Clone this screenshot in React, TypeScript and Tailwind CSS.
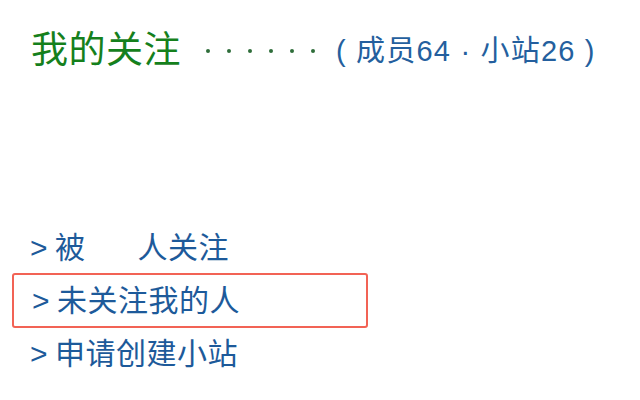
import React from 'react';

const font = { fontFamily: '"Liberation Sans", "Noto Sans CJK SC", sans-serif' };

const App: React.FC = () => {
  return (
    <div className="w-[640px] h-[400px] bg-white overflow-hidden" style={font}>
      {/* Header */}
      <div className="flex items-center pl-[31px] pt-[26px] h-[74px]">
        <h1 className="text-[37px] leading-none text-[#15801c] tracking-[0.5px]">我的关注</h1>
        <div className="flex items-center gap-[17px] ml-[25px] mt-[2px]">
          {[0, 1, 2, 3, 4, 5].map((i) => (
            <span key={i} className="w-[4px] h-[4px] rounded-full bg-[#2f6d3a]" />
          ))}
        </div>
        <p className="ml-[21px] text-[29px] leading-none text-[#245f9e] tracking-[1.2px] mt-[3px]">
          ( 成员64 · 小站26 )
        </p>
      </div>

      {/* Links */}
      <ul className="mt-[148px] text-[30px] tracking-[0.5px] text-[#1d5a9a]">
        <li className="h-[51px] flex items-center pl-[30px]">
          <span className="mr-[7px]">&gt;</span>被<span className="w-[52px]" />人关注
        </li>
        <li className="ml-[12px] w-[356px] h-[55px] flex items-center pl-[18px] border-2 border-[#f26355] rounded-[3px]">
          <span className="mr-[7px]">&gt;</span>未关注我的人
        </li>
        <li className="h-[50px] flex items-center pl-[30px]">
          <span className="mr-[7px]">&gt;</span>申请创建小站
        </li>
      </ul>
    </div>
  );
};

export default App;
